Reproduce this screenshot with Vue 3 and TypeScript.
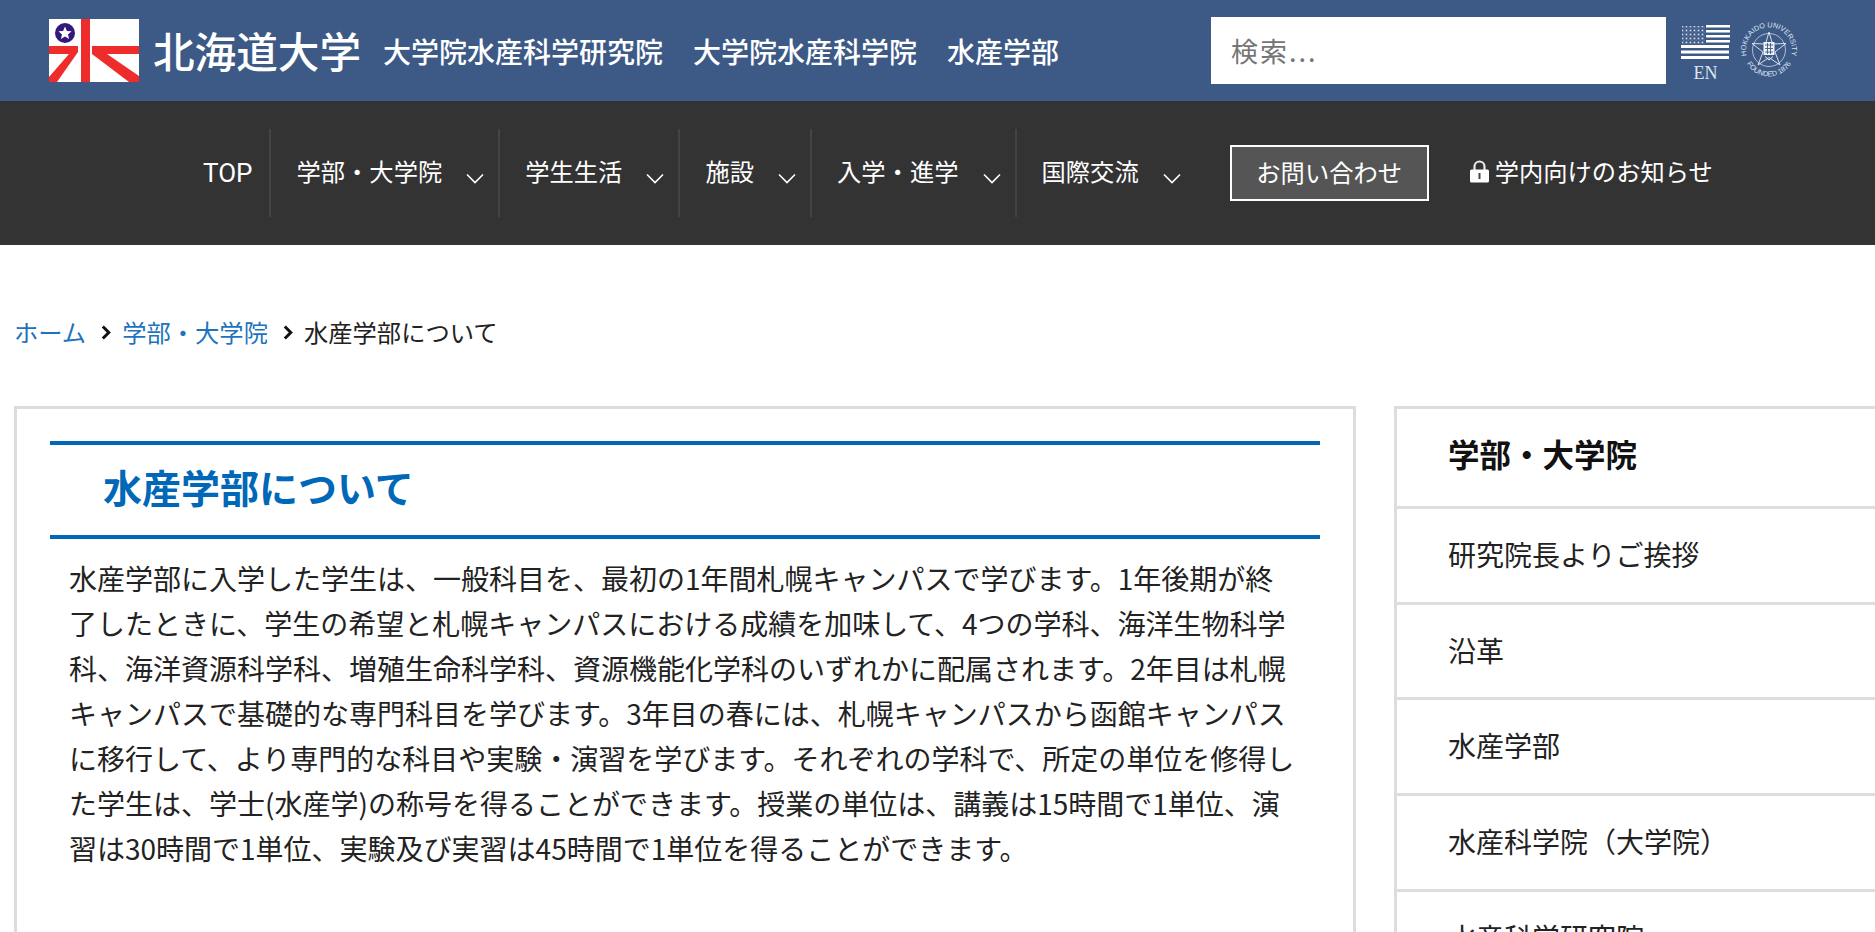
<script setup lang="ts">
const navItems: string[] = ['学部・大学院', '学生生活', '施設', '入学・進学', '国際交流']
const sideItems: string[] = ['研究院長よりご挨拶', '沿革', '水産学部', '水産科学院（大学院）', '水産科学研究院']
const paragraph =
  '水産学部に入学した学生は、一般科目を、最初の1年間札幌キャンパスで学びます。1年後期が終了したときに、学生の希望と札幌キャンパスにおける成績を加味して、4つの学科、海洋生物科学科、海洋資源科学科、増殖生命科学科、資源機能化学科のいずれかに配属されます。2年目は札幌キャンパスで基礎的な専門科目を学びます。3年目の春には、札幌キャンパスから函館キャンパスに移行して、より専門的な科目や実験・演習を学びます。それぞれの学科で、所定の単位を修得した学生は、学士(水産学)の称号を得ることができます。授業の単位は、講義は15時間で1単位、演習は30時間で1単位、実験及び実習は45時間で1単位を得ることができます。'
</script>

<template>
  <div class="page">
    <header class="top">
      <svg class="logo" viewBox="0 0 90 63" width="90" height="63" aria-label="水産学部ロゴ">
        <rect width="90" height="63" fill="#fff" />
        <g fill="#ee2c2c">
          <rect x="32" y="0" width="9" height="63" />
          <path d="M0 27H29V33L8 63H0V58L20 35H0Z" />
          <path d="M43 27H90V35H58L90 57V63H80L43 35Z" />
        </g>
        <circle cx="16" cy="14" r="10" fill="#35187a" />
        <path fill="#fff" d="M16 7.5l1.9 4.4 4.7.4-3.6 3.1 1.1 4.6-4.1-2.5-4.1 2.5 1.1-4.6-3.6-3.1 4.7-.4z" />
      </svg>
      <span class="uni">北海道大学</span>
      <span class="dept first">大学院水産科学研究院</span>
      <span class="dept">大学院水産科学院</span>
      <span class="dept">水産学部</span>
      <input class="search" type="text" placeholder="検索..." />
      <a class="lang">
        <svg width="49" height="35" viewBox="0 0 49 35">
          <g fill="#fff">
            <rect x="25" y="0" width="24" height="2.5" />
            <rect x="25" y="5" width="24" height="2.5" />
            <rect x="25" y="10" width="24" height="2.5" />
            <rect x="25" y="15" width="24" height="2.5" />
            <rect x="0" y="20" width="48" height="3" />
            <rect x="0" y="25.5" width="48" height="3" />
            <rect x="0" y="31" width="48" height="3" />
          </g>
          <pattern id="stars" width="4" height="4" patternUnits="userSpaceOnUse">
            <rect x="0.6" y="0.6" width="1.7" height="1.7" fill="#d5dcea" />
            <rect x="2.6" y="2.6" width="1" height="1" fill="#8c9dbb" />
          </pattern>
          <rect x="1" y="1" width="23" height="18" fill="url(#stars)" />
        </svg>
        <span class="en">EN</span>
      </a>
      <svg class="seal" width="62" height="62" viewBox="-3 -3 62 62">
        <defs>
          <path id="arcTop" d="M5.5 33A23 23 0 1 1 50.5 33" />
          <path id="arcBottom" d="M3 34A25.5 25.5 0 0 0 53 34" />
        </defs>
        <text class="seal-text"><textPath href="#arcTop" startOffset="50%" text-anchor="middle">HOKKAIDO UNIVERSITY</textPath></text>
        <text class="seal-text"><textPath href="#arcBottom" startOffset="50%" text-anchor="middle">FOUNDED 1876</textPath></text>
        <circle cx="28" cy="28" r="16.5" fill="none" stroke="#dfe5f0" stroke-width="0.7" />
        <path fill="none" stroke="#e6ebf4" stroke-width="0.9" d="M28 10L31.5 22L45 21.5L34 30L39 43L28 35.5L17 43L22 30L11 21.5L24.5 22Z" />
        <rect x="22.5" y="20" width="11" height="13" fill="#eef2f8" />
        <path fill="none" stroke="#3d5a87" stroke-width="0.9" d="M24 23H32M24 26.5H32M24 30H32M26.5 21V32M29.5 21V32" />
        <path fill="none" stroke="#eef2f8" stroke-width="1" d="M24 34.5L28 38L32 34.5" />
      </svg>
    </header>

    <nav class="nav">
      <a class="nav-top">TOP</a>
      <a v-for="(item, i) in navItems" :key="item" class="nav-item" :class="{ last: i === navItems.length - 1 }">
        <span>{{ item }}</span>
        <svg class="chev" width="18" height="11" viewBox="0 0 18 11">
          <path d="M1 1.5L9 9.5L17 1.5" fill="none" stroke="#fff" stroke-width="1.6" />
        </svg>
      </a>
      <a class="contact">お問い合わせ</a>
      <a class="internal">
        <svg class="lock" width="19" height="23" viewBox="0 0 19 23">
          <path d="M4.5 11V6.5a5 5 0 0 1 10 0V11" fill="none" stroke="#e8e8e8" stroke-width="2.2" />
          <rect x="0" y="9.5" width="19" height="13" rx="1.5" fill="#fff" />
          <rect x="8.5" y="13" width="2" height="6" fill="#444" />
        </svg>
        <span>学内向けのお知らせ</span>
      </a>
    </nav>

    <div class="crumbs">
      <a>ホーム</a>
      <svg class="crumb-sep" width="10" height="15" viewBox="0 0 10 15"><path d="M1.8 1.5L7.8 7.5L1.8 13.5" fill="none" stroke="#111" stroke-width="3" /></svg>
      <a>学部・大学院</a>
      <svg class="crumb-sep" width="10" height="15" viewBox="0 0 10 15"><path d="M1.8 1.5L7.8 7.5L1.8 13.5" fill="none" stroke="#111" stroke-width="3" /></svg>
      <span>水産学部について</span>
    </div>

    <div class="columns">
      <main class="card">
        <h1 class="title">水産学部について</h1>
        <p class="body">{{ paragraph }}</p>
      </main>
      <aside class="side">
        <h2 class="side-head">学部・大学院</h2>
        <a v-for="item in sideItems" :key="item" class="side-row">{{ item }}</a>
      </aside>
    </div>
  </div>
</template>

<style>
html, body { margin: 0; background: #fff; }
</style>

<style scoped>
.page {
  width: 1875px;
  height: 932px;
  overflow: hidden;
  font-family: "Noto Sans CJK JP", "Noto Sans", sans-serif;
  color: #222;
  background: #fff;
}
.top {
  height: 101px;
  background: #3d5a87;
  display: flex;
  align-items: center;
  padding-left: 49px;
  box-sizing: border-box;
  color: #fff;
}
.logo { flex: none; margin-bottom: 1px; }
.uni { font-size: 41.6px; font-weight: 500; margin-left: 14px; line-height: 1; }
.dept { font-size: 28px; margin-left: 30px; line-height: 1; font-weight: 500; }
.dept.first { margin-left: 22px; }
.search {
  margin-left: 152px;
  width: 455px;
  height: 67px;
  border: 0;
  padding: 0 20px;
  box-sizing: border-box;
  font: inherit;
  font-size: 27px;
  background: #fff;
  outline: none;
}
.search::placeholder { color: #757575; opacity: 1; letter-spacing: 2px; }
.lang {
  margin-left: 15px;
  display: flex;
  flex-direction: column;
  align-items: center;
  width: 49px;
  margin-top: 7px;
}
.en {
  font-family: "Liberation Serif", serif;
  font-size: 18px;
  line-height: 20px;
  margin-top: 3px;
  color: #dfe5f0;
}
.seal { margin-left: 8px; margin-bottom: 1px; flex: none; }
.seal-text {
  font-family: "Liberation Sans", sans-serif;
  font-size: 7.2px;
  fill: #dfe5f0;
}
.nav {
  height: 144px;
  background: #333;
  display: flex;
  align-items: center;
  padding-left: 203px;
  box-sizing: border-box;
  color: #fff;
  font-size: 24.3px;
  line-height: 1;
}
.nav-top {
  height: 88px;
  display: flex;
  align-items: center;
  padding-right: 17px;
  border-right: 2px solid #444;
  font-family: "Roboto", sans-serif;
  font-size: 26px;
}
.nav-item {
  height: 88px;
  display: flex;
  align-items: center;
  padding: 0 14px 0 25px;
  border-right: 2px solid #444;
}
.nav-item.last { border-right: 0; padding-right: 49px; }
.nav-item span { margin-top: -4px; }
.chev { margin: 10px 0 0 24px; }
.contact {
  width: 199px;
  height: 56px;
  box-sizing: border-box;
  border: 2px solid #fff;
  background: #555;
  display: flex;
  align-items: center;
  justify-content: center;
  padding-bottom: 2px;
}
.internal {
  display: flex;
  align-items: center;
  gap: 6px;
  margin-left: 41px;
  padding-bottom: 3px;
}
.lock { flex: none; }
.crumbs {
  display: flex;
  align-items: center;
  height: 32px;
  margin-top: 71px;
  padding-left: 14px;
  font-size: 24.3px;
  line-height: 32px;
}
.crumbs a { color: #1e73be; }
.crumb-sep { margin: 0 11px 0 15px; flex: none; }
.columns {
  display: flex;
  align-items: flex-start;
  gap: 38px;
  margin-top: 58px;
  padding-left: 14px;
}
.card {
  flex: none;
  width: 1342px;
  height: 800px;
  box-sizing: border-box;
  border: 3px solid #ddd;
  padding: 32px 33px;
}
.title {
  margin: 0;
  height: 98px;
  box-sizing: border-box;
  border-top: 4px solid #0068b7;
  border-bottom: 4px solid #0068b7;
  padding-left: 53px;
  padding-bottom: 9px;
  display: flex;
  align-items: center;
  color: #0068b7;
  font-size: 39px;
  font-weight: 700;
}
.body {
  margin: 17px 0 0;
  padding: 0 20px 0 19px;
  font-size: 28px;
  line-height: 45px;
  color: #222;
}
.side {
  flex: none;
  width: 520px;
  box-sizing: border-box;
  border: 3px solid #ddd;
  border-right: 0;
}
.side-head {
  margin: 0;
  height: 97px;
  box-sizing: border-box;
  padding-left: 51px;
  padding-bottom: 9px;
  display: flex;
  align-items: center;
  font-size: 31.5px;
  font-weight: 700;
  color: #111;
}
.side-row {
  display: flex;
  align-items: center;
  height: 95.7px;
  box-sizing: border-box;
  border-top: 3px solid #ddd;
  padding-left: 51px;
  padding-bottom: 3px;
  font-size: 28px;
  color: #222;
}
</style>
